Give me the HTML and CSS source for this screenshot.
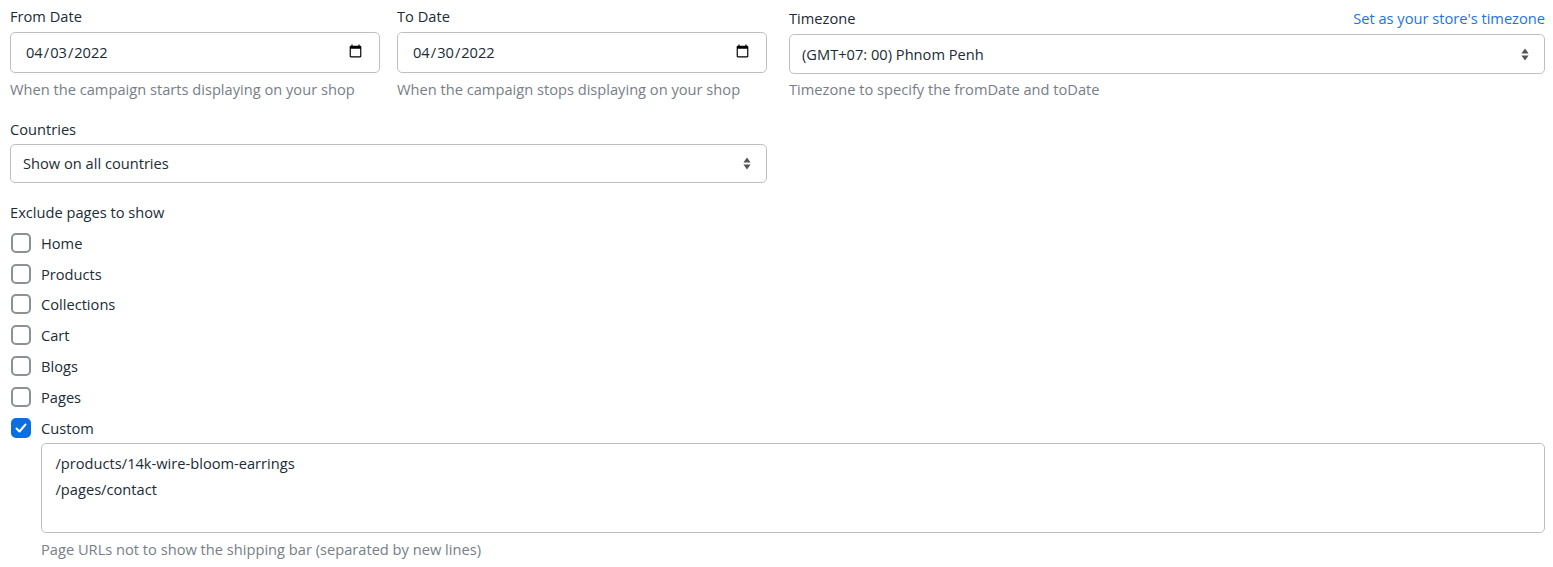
FILE: index.html
```html
<!DOCTYPE html>
<html lang="en">
<head>
<meta charset="utf-8">
<title>Campaign settings</title>
<link rel="stylesheet" href="styles.css">
</head>
<body>
<form class="form">
  <div class="top-row">
    <div class="field date-field">
      <label class="label" for="from">From Date</label>
      <input class="control date" id="from" type="date" value="2022-04-03">
      <p class="help">When the campaign starts displaying on your shop</p>
    </div>
    <div class="field date-field">
      <label class="label" for="to">To Date</label>
      <input class="control date" id="to" type="date" value="2022-04-30">
      <p class="help">When the campaign stops displaying on your shop</p>
    </div>
    <div class="field tz-field">
      <div class="label-row">
        <label class="label" for="tz">Timezone</label>
        <a class="link" href="#">Set as your store's timezone</a>
      </div>
      <select class="control select" id="tz"><option>(GMT+07: 00) Phnom Penh</option></select>
      <p class="help">Timezone to specify the fromDate and toDate</p>
    </div>
  </div>
  <div class="countries">
    <label class="label" for="countries">Countries</label>
    <select class="control select" id="countries"><option>Show on all countries</option></select>
  </div>
  <div class="pages">
    <span class="label">Exclude pages to show</span>
    <ul class="checks">
      <li><label class="check"><input type="checkbox"><span>Home</span></label></li>
      <li><label class="check"><input type="checkbox"><span>Products</span></label></li>
      <li><label class="check"><input type="checkbox"><span>Collections</span></label></li>
      <li><label class="check"><input type="checkbox"><span>Cart</span></label></li>
      <li><label class="check"><input type="checkbox"><span>Blogs</span></label></li>
      <li><label class="check"><input type="checkbox"><span>Pages</span></label></li>
      <li><label class="check"><input type="checkbox" checked><span>Custom</span></label></li>
    </ul>
    <div class="custom">
      <textarea class="control area" rows="3">/products/14k-wire-bloom-earrings
/pages/contact</textarea>
      <p class="help">Page URLs not to show the shipping bar (separated by new lines)</p>
    </div>
  </div>
</form>
</body>
</html>
```
FILE: styles.css
```css
* { box-sizing: border-box; }
html, body { margin: 0; background: #fff; }
body {
  font-family: "Open Sans", "Noto Sans", sans-serif;
  font-size: 14.65px;
  color: #212b36;
}
.form { padding: 7px 8px 0 10px; }
.top-row { display: flex; gap: 17px; }
.date-field { width: 370px; flex: none; }
.tz-field { flex: 1; margin-left: 5px; }
.label { display: block; line-height: 19px; }
.label-row { display: flex; justify-content: space-between; margin-top: 2px; }
.link { color: #1a73e8; text-decoration: none; line-height: 19px; }
.control {
  display: block;
  width: 100%;
  font: inherit;
  color: inherit;
  background-color: #fff;
  border: 1px solid #bcc0c4;
  border-radius: 5px;
}
.date { height: 41px; margin-top: 6px; padding: 0 14px 2px; }
.select {
  height: 40px;
  margin-top: 6px;
  padding: 0 12px;
  appearance: none;
  background-image: url("data:image/svg+xml,%3Csvg xmlns='http://www.w3.org/2000/svg' width='8' height='13'%3E%3Cpath fill='%23555' d='M4 .5l3.6 5H.4zM4 12.5L.4 7.5h7.2z'/%3E%3C/svg%3E");
  background-repeat: no-repeat;
  background-position: right 15px center;
}
.help { margin: 7px 0 0; line-height: 19px; color: #777e86; }
.tz-field .help { margin-top: 6px; }
.countries { margin-top: 21px; width: 757px; }
.countries .select { height: 39px; margin-top: 5px; padding-bottom: 2px; }
.pages { margin-top: 20px; }
.checks { list-style: none; margin: 5.45px 0 0; padding: 0; }
.check { display: flex; align-items: center; gap: 10px; height: 30.8px; }
.check input {
  appearance: none;
  width: 20px;
  height: 20px;
  margin: 0 0 0 1px;
  border: 2px solid #8c9196;
  border-radius: 5px;
  background: #fff;
}
.check input:checked {
  border-color: #0a6fdf;
  background-color: #0a6fdf;
  background-image: url("data:image/svg+xml,%3Csvg xmlns='http://www.w3.org/2000/svg' width='16' height='16'%3E%3Cpath fill='none' stroke='%23fff' stroke-width='2' stroke-linecap='round' stroke-linejoin='round' d='M3.5 8.5l3 3 6-7'/%3E%3C/svg%3E");
  background-position: center;
  background-repeat: no-repeat;
}
.custom { margin-top: -0.45px; margin-left: 31px; }
.area {
  height: 90px;
  padding: 6px 13.5px;
  line-height: 26px;
  resize: none;
  overflow: hidden;
}
.custom .help { margin-top: 7px; }
```
